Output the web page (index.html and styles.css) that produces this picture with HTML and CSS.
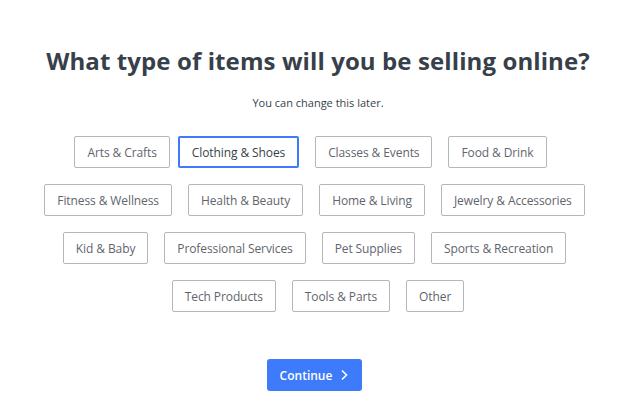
FILE: index.html
```html
<!DOCTYPE html>
<html>
<head>
    <title>Choose your items</title>
    <link rel="stylesheet" href="styles.css">
</head>
<body>
    <div class="container">
        <h1>What type of items will you be selling online?</h1>
        <p class="subtitle">You can change this later.</p>

        <div class="options">
            <div class="row row-1">
                <button type="button" class="option">Arts &amp; Crafts</button>
                <button type="button" class="option selected">Clothing &amp; Shoes</button>
                <button type="button" class="option">Classes &amp; Events</button>
                <button type="button" class="option">Food &amp; Drink</button>
            </div>
            <div class="row row-2">
                <button type="button" class="option">Fitness &amp; Wellness</button>
                <button type="button" class="option">Health &amp; Beauty</button>
                <button type="button" class="option">Home &amp; Living</button>
                <button type="button" class="option">Jewelry &amp; Accessories</button>
            </div>
            <div class="row row-3">
                <button type="button" class="option">Kid &amp; Baby</button>
                <button type="button" class="option">Professional Services</button>
                <button type="button" class="option">Pet Supplies</button>
                <button type="button" class="option">Sports &amp; Recreation</button>
            </div>
            <div class="row">
                <button type="button" class="option">Tech Products</button>
                <button type="button" class="option">Tools &amp; Parts</button>
                <button type="button" class="option">Other</button>
            </div>
        </div>

        <button type="button" class="continue">
            Continue
            <svg width="10" height="12" viewBox="0 0 10 12">
                <path d="M3 1.5 L7.5 6 L3 10.5" fill="none" stroke="#fff" stroke-width="1.6"/>
            </svg>
        </button>
    </div>
</body>
</html>
```

FILE: styles.css
```css
body {
    font-family: "Open Sans", Arial, sans-serif;
    margin: 0;
    padding: 0;
    background-color: #fff;
    color: #373f4a;
}
.container {
    padding-top: 43px;
    text-align: center;
}
h1 {
    margin: 0;
    font-size: 24px;
    font-weight: 700;
    line-height: 36px;
    letter-spacing: 0.1px;
    color: #373f4a;
}
.subtitle {
    margin: 16px 0 0;
    font-size: 11px;
    line-height: 16px;
}
.options {
    margin-top: 25px;
    display: flex;
    flex-direction: column;
    gap: 16px;
}
.row {
    display: flex;
    justify-content: center;
    gap: 16px;
}
.row-1 {
    padding-right: 15px;
}
.row-2,
.row-3 {
    padding-right: 7px;
}
.option {
    height: 32px;
    padding: 0 12px;
    font-family: inherit;
    font-size: 12px;
    letter-spacing: -0.1px;
    color: #5f656d;
    background-color: #fff;
    border: 1px solid #b4b6b9;
    border-radius: 2px;
    cursor: pointer;
}
.option.selected {
    margin-left: -8px;
    color: #373f4a;
    border: 2px solid #3e7bfa;
}
.continue {
    margin-top: 47px;
    margin-right: 7px;
    height: 32px;
    padding: 0 13px;
    display: inline-flex;
    align-items: center;
    gap: 7px;
    font-family: inherit;
    font-size: 12px;
    font-weight: 600;
    color: #fff;
    background-color: #3e7bfa;
    border: none;
    border-radius: 3px;
    cursor: pointer;
}
```
